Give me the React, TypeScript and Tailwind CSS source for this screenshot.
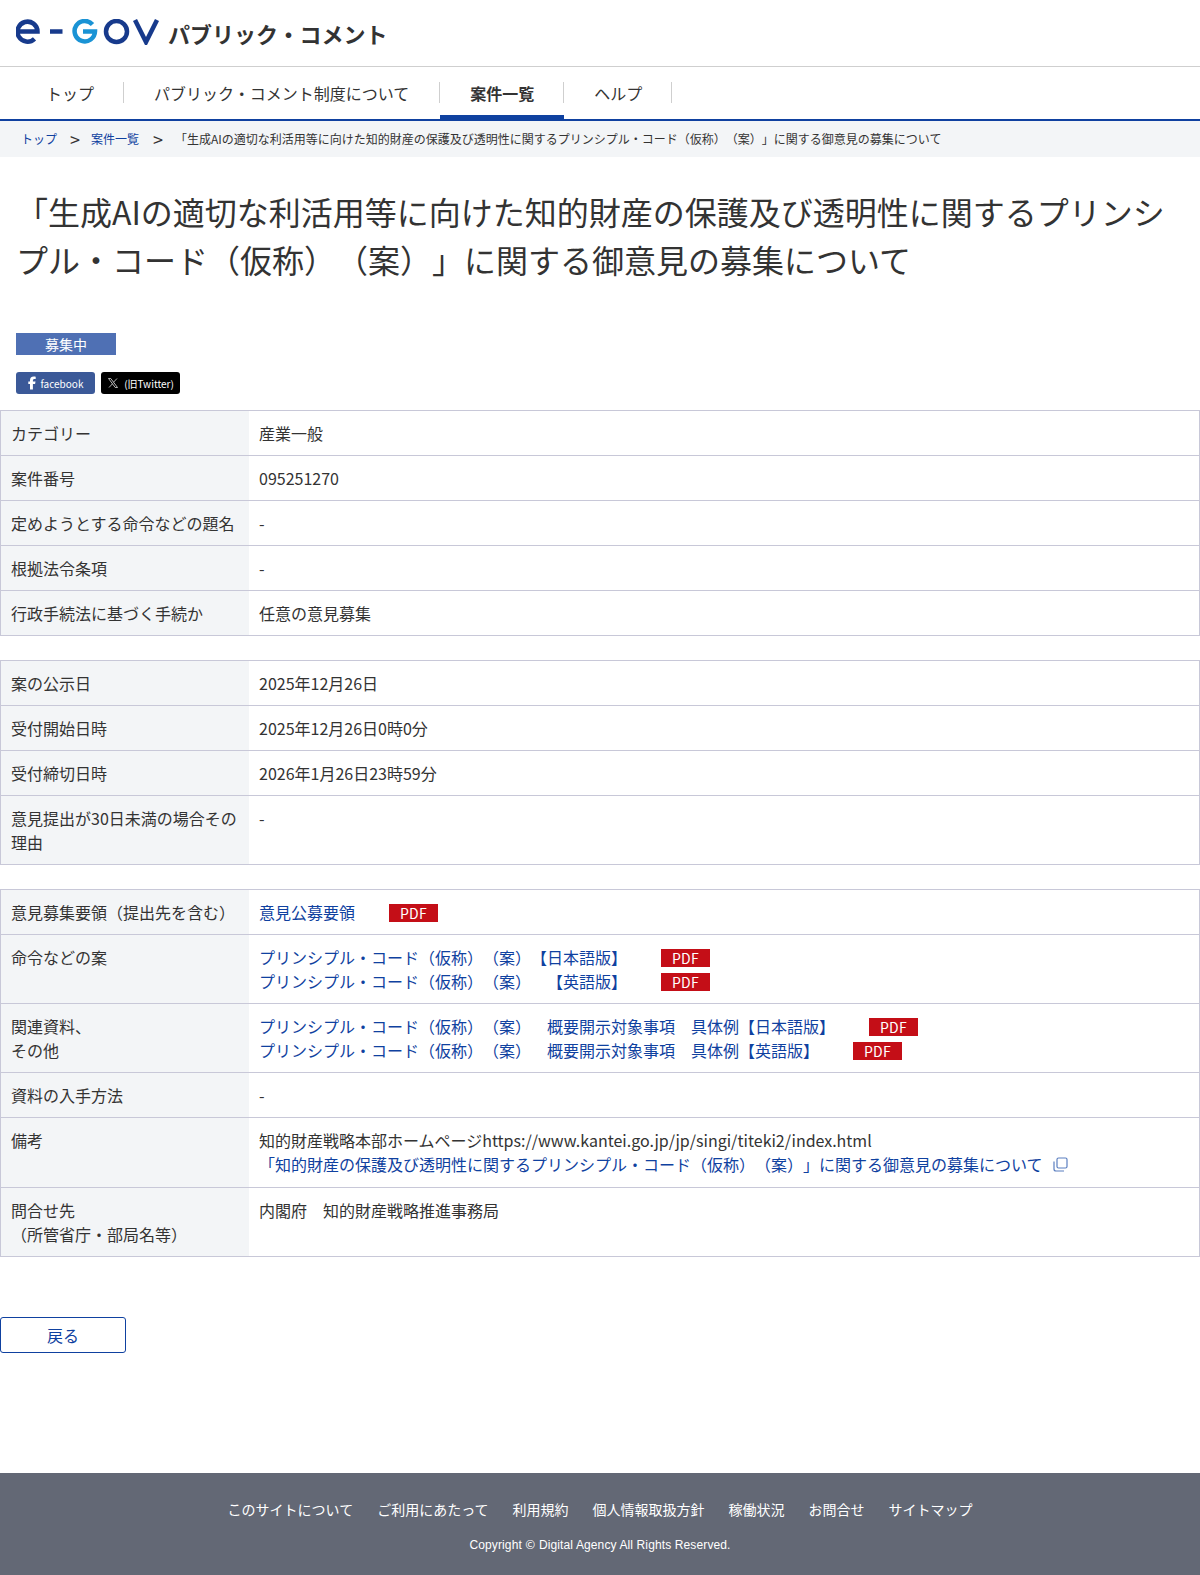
import { Fragment, type ReactNode } from "react";

const font = "font-['Noto_Sans_CJK_JP','Noto_Sans',sans-serif] [text-spacing-trim:space-all]";
const link = "text-[#0f41a0]";

function Pdf({ ml }: { ml: string }) {
  return (
    <span className={`inline-block w-[49px] h-[18px] bg-[#c40e17] text-white text-sm tracking-[0.3px] pl-px leading-[18px] text-center align-[0px] ${ml}`}>
      PDF
    </span>
  );
}

function Row({ label, children }: { label: ReactNode; children: ReactNode }) {
  return (
    <tr className="border-t border-[#c8c8d8] first:border-t-0">
      <th className="w-[248px] bg-[#f3f5f7] font-normal text-left align-top px-[10px] py-[10px] leading-6">{label}</th>
      <td className="align-top pl-[10.5px] pr-[10px] py-[10px] leading-6">{children}</td>
    </tr>
  );
}

function InfoTable({ children }: { children: ReactNode }) {
  return (
    <table className="w-full border border-[#c8c8d8] border-collapse mb-[24px] text-base text-[#333]">
      <tbody>{children}</tbody>
    </table>
  );
}

function Logo() {
  return (
    <svg width="144" height="26" viewBox="0 0 144 26" fill="none" className="mt-[-2px]">
      <path d="M2 12.5h19.5a10 10 0 1 0-3 7.3" stroke="#173a8c" strokeWidth="4.5" />
      <path d="M34 12.5h12.5" stroke="#173a8c" strokeWidth="4.5" />
      <path d="M76.5 5.5a10.2 10.2 0 1 0 2.5 7H67" stroke="#1a93d5" strokeWidth="4.5" />
      <circle cx="100.5" cy="12.5" r="10.5" stroke="#173a8c" strokeWidth="4.5" />
      <path d="M119 1l11 22L141 1" stroke="#173a8c" strokeWidth="4.5" />
    </svg>
  );
}

export default function App() {
  const navs = ["トップ", "パブリック・コメント制度について", "案件一覧", "ヘルプ"];
  const footers = ["このサイトについて", "ご利用にあたって", "利用規約", "個人情報取扱方針", "稼働状況", "お問合せ", "サイトマップ"];

  return (
    <div className={`${font} bg-white text-[#333] w-[1200px] h-[1575px] flex flex-col`}>
      <header className="h-[67px] border-b border-[#cfcfcf] flex items-center pl-4 gap-[8px]">
        <Logo />
        <span className="text-[22px] font-bold">パブリック・コメント</span>
      </header>

      <nav className="h-[54px] border-b-2 border-[#0f41a0] flex pl-4">
        {navs.map((n, i) => (
          <div key={n} className={`h-[53px] flex items-start ${i === 2 ? "border-b-[5px] border-[#0f41a0]" : ""}`}>
            <div className={`mt-[15px] h-[21px] flex items-center pl-[30px] text-base border-r border-[#cfcfcf] ${i === 1 ? "pr-[30px]" : "pr-[29px]"} ${i === 2 ? "font-bold" : ""}`}>{n}</div>
          </div>
        ))}
      </nav>

      <div className="h-[36px] bg-[#f3f5f7] flex items-center pl-[21px] text-xs">
        <span className={link}>トップ</span>
        <span className="ml-[13px] mr-[11px] text-lg leading-none">&gt;</span>
        <span className={link}>案件一覧</span>
        <span className="ml-[14px] mr-[12px] text-lg leading-none">&gt;</span>
        <span>「生成AIの適切な利活用等に向けた知的財産の保護及び透明性に関するプリンシプル・コード（仮称）（案）」に関する御意見の募集について</span>
      </div>

      <h1 className="text-[32px] leading-[48px] font-normal px-4 mt-[30px]">
        「生成AIの適切な利活用等に向けた知的財産の保護及び透明性に関するプリンシプル・コード（仮称）（案）」に関する御意見の募集について
      </h1>

      <div className="ml-4 mt-[50px] w-[100px] h-[22px] bg-[#4f70b4] text-white text-sm leading-[22px] text-center">募集中</div>

      <div className="ml-4 mt-[17px] flex gap-[6px] mb-[16px]">
        <div className="w-[79px] h-[22px] rounded-[3px] bg-[#3b5998] text-white flex items-center justify-center gap-[5px] text-[10px]">
          <svg width="8" height="14" viewBox="0 0 320 512" fill="#fff">
            <path d="M80 299v213h116V299h87l18-100H196v-35c0-53 21-73 75-73 17 0 30 0 37 1V2c-15-4-51-8-72-8C126-6 80 46 80 158v41H12v100z" />
          </svg>
          facebook
        </div>
        <div className="w-[79px] h-[22px] rounded-[3px] bg-black text-white flex items-center justify-center gap-[5px] text-[10px]">
          <svg width="12" height="12" viewBox="0 0 24 24" fill="none" stroke="#fff" strokeWidth="1.4">
            <path d="M3 3h4.5L21 21h-4.5zM20 3l-7 7.5M4 21l7-7.5" />
          </svg>
          (旧Twitter)
        </div>
      </div>

      <InfoTable>
        <Row label="カテゴリー">産業一般</Row>
        <Row label="案件番号">095251270</Row>
        <Row label="定めようとする命令などの題名">-</Row>
        <Row label="根拠法令条項">-</Row>
        <Row label="行政手続法に基づく手続か">任意の意見募集</Row>
      </InfoTable>

      <InfoTable>
        <Row label="案の公示日">2025年12月26日</Row>
        <Row label="受付開始日時">2025年12月26日0時0分</Row>
        <Row label="受付締切日時">2026年1月26日23時59分</Row>
        <Row label="意見提出が30日未満の場合その理由">-</Row>
      </InfoTable>

      <InfoTable>
        <Row label="意見募集要領（提出先を含む）">
          <span className={link}>意見公募要領</span>
          <Pdf ml="ml-[33.5px]" />
        </Row>
        <Row label="命令などの案">
          <span className={link}>プリンシプル・コード（仮称）（案）【日本語版】</span>
          <Pdf ml="ml-[33.5px]" />
          <br />
          <span className={link}>プリンシプル・コード（仮称）（案）　【英語版】</span>
          <Pdf ml="ml-[33.5px]" />
        </Row>
        <Row label={<Fragment>関連資料、<br />その他</Fragment>}>
          <span className={link}>プリンシプル・コード（仮称）（案）　概要開示対象事項　具体例【日本語版】</span>
          <Pdf ml="ml-[33.5px]" />
          <br />
          <span className={link}>プリンシプル・コード（仮称）（案）　概要開示対象事項　具体例【英語版】</span>
          <Pdf ml="ml-[33.5px]" />
        </Row>
        <Row label="資料の入手方法">-</Row>
        <Row label="備考">
          <div className="pb-px">
            知的財産戦略本部ホームページhttps://www.kantei.go.jp/jp/singi/titeki2/index.html
            <br />
            <span className={link}>「知的財産の保護及び透明性に関するプリンシプル・コード（仮称）（案）」に関する御意見の募集について</span>
            <svg className="inline-block ml-[10.5px] align-[-1px]" width="15" height="15" viewBox="0 0 15 15" fill="none" stroke="#5b7fc0" strokeWidth="1.2">
              <rect x="4" y="1" width="10" height="10" rx="1.5" />
              <path d="M1 4.5V12a2 2 0 0 0 2 2h8" />
            </svg>
          </div>
        </Row>
        <Row label={<Fragment>問合せ先<br />（所管省庁・部局名等）</Fragment>}>内閣府　知的財産戦略推進事務局</Row>
      </InfoTable>

      <button className={`mt-[36px] w-[126px] h-[36px] border border-[#0f41a0] rounded-[3px] text-base ${link}`}>戻る</button>

      <footer className="mt-auto h-[102px] bg-[#636875] text-white flex flex-col items-center pt-[27px] font-['Liberation_Sans','Noto_Sans_CJK_JP',sans-serif]">
        <div className="flex gap-6 text-sm leading-5">
          {footers.map((f) => (
            <span key={f}>{f}</span>
          ))}
        </div>
        <div className="text-xs tracking-[0.12px] mt-[16px] leading-4">
          Copyright <span className="font-['Noto_Sans_CJK_JP']">©</span> Digital Agency All Rights Reserved.
        </div>
      </footer>
    </div>
  );
}
